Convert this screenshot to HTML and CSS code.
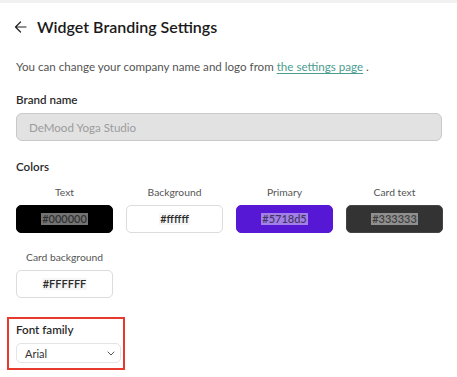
FILE: index.html
```html
<!DOCTYPE html>
<html>
<head>
<meta charset="utf-8">
<link rel="stylesheet" href="styles.css">
</head>
<body>
<div class="topbar"></div>
<main class="page">
  <header class="head">
    <svg class="back" width="13" height="12" viewBox="0 0 13 12"><path d="M12 6H1.5M6.5 1 1.5 6l5 5" fill="none" stroke="#222" stroke-width="1.2" stroke-linecap="round" stroke-linejoin="round"/></svg>
    <h1 class="title">Widget Branding Settings</h1>
  </header>
  <p class="intro">You can change your company name and logo from <a class="link" href="#">the settings page</a> .</p>

  <section class="field">
    <div class="label">Brand name</div>
    <div class="input">DeMood Yoga Studio</div>
  </section>

  <section class="field colors">
    <div class="label">Colors</div>
    <div class="grid">
      <div class="swatch"><div class="sw-label">Text</div><div class="sw-box c-black"><span class="hex">#000000</span></div></div>
      <div class="swatch"><div class="sw-label">Background</div><div class="sw-box c-white"><span class="hex light">#ffffff</span></div></div>
      <div class="swatch"><div class="sw-label">Primary</div><div class="sw-box c-purple"><span class="hex">#5718d5</span></div></div>
      <div class="swatch"><div class="sw-label">Card text</div><div class="sw-box c-dark"><span class="hex">#333333</span></div></div>
      <div class="swatch"><div class="sw-label">Card background</div><div class="sw-box c-white"><span class="hex light">#FFFFFF</span></div></div>
    </div>
  </section>

  <section class="font-box">
    <div class="label">Font family</div>
    <div class="select"><span>Arial</span>
      <svg width="8" height="5" viewBox="0 0 8 5"><path d="M1 1l3 3 3-3" fill="none" stroke="#555" stroke-width="1" stroke-linecap="round" stroke-linejoin="round"/></svg>
    </div>
  </section>
</main>
</body>
</html>
```

FILE: styles.css
```css
* { box-sizing: border-box; }
html, body { margin: 0; padding: 0; background: #fff; }
body { font-family: Lato, "Noto Sans", sans-serif; color: #222; width: 457px; height: 377px; overflow: hidden; }
.topbar { height: 3px; background: #f1f1f1; }
.page { padding: 0 16px 0 16px; }
.head { display: flex; align-items: center; gap: 10px; height: 47px; margin-left: -2px; }
.back { flex: none; }
.title { margin: 0; font-size: 16px; font-weight: 600; color: #1a1a1a; line-height: 20px; }
.intro { margin: 9px 0 0; font-size: 11.6px; color: #555; line-height: 16px; }
.link { color: #4a9d8f; text-decoration: underline; text-underline-offset: 2px; }
.field { margin-top: 17px; }
.colors { margin-top: 18px; }
.label { font-size: 11.6px; font-weight: 600; color: #2a2a2a; line-height: 16px; }
.input { margin-top: 5px; height: 28px; border: 1px solid #c9c9c9; border-radius: 6px; background: #e2e2e2; color: #9c9c9c; font-size: 11.6px; display: flex; align-items: center; padding-left: 12px; width: 426px; }
.grid { display: grid; grid-template-columns: repeat(4, 97px); column-gap: 13px; row-gap: 17px; margin-top: 10px; }
.swatch { display: flex; flex-direction: column; align-items: center; gap: 6px; }
.sw-label { font-size: 10.3px; color: #555; line-height: 14px; }
.sw-box { width: 97px; height: 28px; border-radius: 5px; display: flex; align-items: center; justify-content: center; border: 1px solid #dcdcdc; }
.c-black { background: #000; border-color: #000; }
.c-white { background: #fff; }
.c-purple { background: #5718d5; border-color: #5718d5; }
.c-dark { background: #333; border-color: #444; }
.hex { font-size: 11px; line-height: 12px; padding: 0 1px; background: rgba(255,255,255,0.45); color: rgba(0,0,0,0.6); font-weight: 600; }
.hex.light { background: #f6f6f6; color: #2a2a2a; }
.font-box { margin-top: 19px; margin-left: -9px; width: 118px; height: 53px; border: 2px solid #e8392f; padding: 3px 5px 5px 7px; }
.select { margin-top: 5px; height: 20px; width: 105px; border: 1px solid #e4e4e4; border-radius: 5px; display: flex; align-items: center; justify-content: space-between; padding: 0 5px 0 8px; font-size: 11px; color: #333; }
```
